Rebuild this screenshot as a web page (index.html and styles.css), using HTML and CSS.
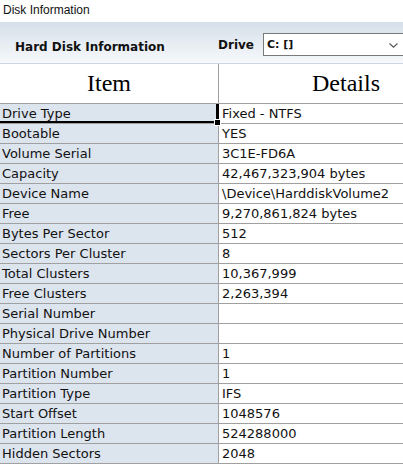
FILE: index.html
```html
<!DOCTYPE html>
<html lang="en">
<head>
    <meta charset="UTF-8">
    <title>Disk Information</title>
    <link rel="stylesheet" href="styles.css">
</head>
<body>
    <div class="title-bar">Disk Information</div>

    <div class="info-header">
        <div class="header-title">Hard Disk Information</div>
        <div class="drive-label">Drive</div>
        <div class="drive-combo">
            <span class="drive-value">C: []</span>
            <svg class="chevron" width="9" height="5" viewBox="0 0 9 5">
                <path d="M0.5 0.5 L4.5 4.2 L8.5 0.5" fill="none" stroke="#555" stroke-width="1.1"/>
            </svg>
        </div>
    </div>

    <div class="grid">
        <div class="grid-row head">
            <div class="cell item">Item</div>
            <div class="cell details">Details</div>
        </div>
        <div class="grid-row">
            <div class="cell item selected">Drive Type<span class="handle"></span></div>
            <div class="cell details">Fixed - NTFS</div>
        </div>
        <div class="grid-row">
            <div class="cell item">Bootable</div>
            <div class="cell details">YES</div>
        </div>
        <div class="grid-row">
            <div class="cell item">Volume Serial</div>
            <div class="cell details">3C1E-FD6A</div>
        </div>
        <div class="grid-row">
            <div class="cell item">Capacity</div>
            <div class="cell details">42,467,323,904 bytes</div>
        </div>
        <div class="grid-row">
            <div class="cell item">Device Name</div>
            <div class="cell details">\Device\HarddiskVolume2</div>
        </div>
        <div class="grid-row">
            <div class="cell item">Free</div>
            <div class="cell details">9,270,861,824 bytes</div>
        </div>
        <div class="grid-row">
            <div class="cell item">Bytes Per Sector</div>
            <div class="cell details">512</div>
        </div>
        <div class="grid-row">
            <div class="cell item">Sectors Per Cluster</div>
            <div class="cell details">8</div>
        </div>
        <div class="grid-row">
            <div class="cell item">Total Clusters</div>
            <div class="cell details">10,367,999</div>
        </div>
        <div class="grid-row">
            <div class="cell item">Free Clusters</div>
            <div class="cell details">2,263,394</div>
        </div>
        <div class="grid-row">
            <div class="cell item">Serial Number</div>
            <div class="cell details"></div>
        </div>
        <div class="grid-row">
            <div class="cell item">Physical Drive Number</div>
            <div class="cell details"></div>
        </div>
        <div class="grid-row">
            <div class="cell item">Number of Partitions</div>
            <div class="cell details">1</div>
        </div>
        <div class="grid-row">
            <div class="cell item">Partition Number</div>
            <div class="cell details">1</div>
        </div>
        <div class="grid-row">
            <div class="cell item">Partition Type</div>
            <div class="cell details">IFS</div>
        </div>
        <div class="grid-row">
            <div class="cell item">Start Offset</div>
            <div class="cell details">1048576</div>
        </div>
        <div class="grid-row">
            <div class="cell item">Partition Length</div>
            <div class="cell details">524288000</div>
        </div>
        <div class="grid-row">
            <div class="cell item">Hidden Sectors</div>
            <div class="cell details">2048</div>
        </div>
    </div>
</body>
</html>
```

FILE: styles.css
```css
body {
    margin: 0;
    background: #fff;
    font-family: "DejaVu Sans", Verdana, sans-serif;
    overflow: hidden;
}
.title-bar {
    height: 22px;
    line-height: 20px;
    padding-left: 3px;
    font-family: "Liberation Sans", Arial, sans-serif;
    font-size: 12px;
    color: #111;
}
.info-header {
    display: flex;
    align-items: center;
    background: linear-gradient(#d5dfe9, #f7f9fb);
    border-bottom: 1px solid #ccd7e3;
    box-sizing: border-box;
    height: 42px;
}
.header-title {
    width: 203px;
    padding-left: 15px;
    font-size: 12px;
    font-weight: bold;
    color: #111;
    padding-top: 8px;
}
.drive-label {
    width: 45px;
    font-size: 12px;
    font-weight: bold;
    color: #111;
    padding-top: 4px;
}
.drive-combo {
    flex: 1;
    height: 23px;
    margin-top: 4px;
    border: 1px solid #7a7a7a;
    border-right: none;
    background: #fff;
    display: flex;
    align-items: center;
    justify-content: space-between;
    padding: 0 5px 0 3px;
    box-sizing: border-box;
}
.drive-value {
    font-size: 11px;
    font-weight: bold;
    color: #111;
}
.chevron {
    margin-top: 2px;
}
.grid {
    display: flex;
    flex-direction: column;
}
.grid-row {
    display: flex;
    height: 20px;
    border-bottom: 1px solid #a0a0a0;
    box-sizing: border-box;
}
.grid-row.head {
    height: 40px;
}
.cell {
    box-sizing: border-box;
    font-size: 13px;
    line-height: 20px;
    color: #111;
    white-space: nowrap;
}
.cell.item {
    width: 219px;
    padding-left: 2px;
    background: #dce4ee;
    border-right: 1px solid #a0a0a0;
    position: relative;
}
.cell.details {
    flex: 1;
    padding-left: 3px;
}
.head .cell {
    background: #fff;
    font-family: "Liberation Serif", "Times New Roman", serif;
    font-size: 24px;
    line-height: 38px;
    color: #000;
    padding: 0;
}
.head .cell.item {
    text-align: center;
}
.head .cell.details {
    padding-left: 93px;
}
.cell.item.selected {
    border-right: 3px solid #000;
    box-shadow: inset 0 -2px 0 #000;
}
.handle {
    position: absolute;
    right: -5px;
    bottom: -3px;
    width: 5px;
    height: 5px;
    background: #000;
    border: 1px solid #fff;
    z-index: 1;
}
```
